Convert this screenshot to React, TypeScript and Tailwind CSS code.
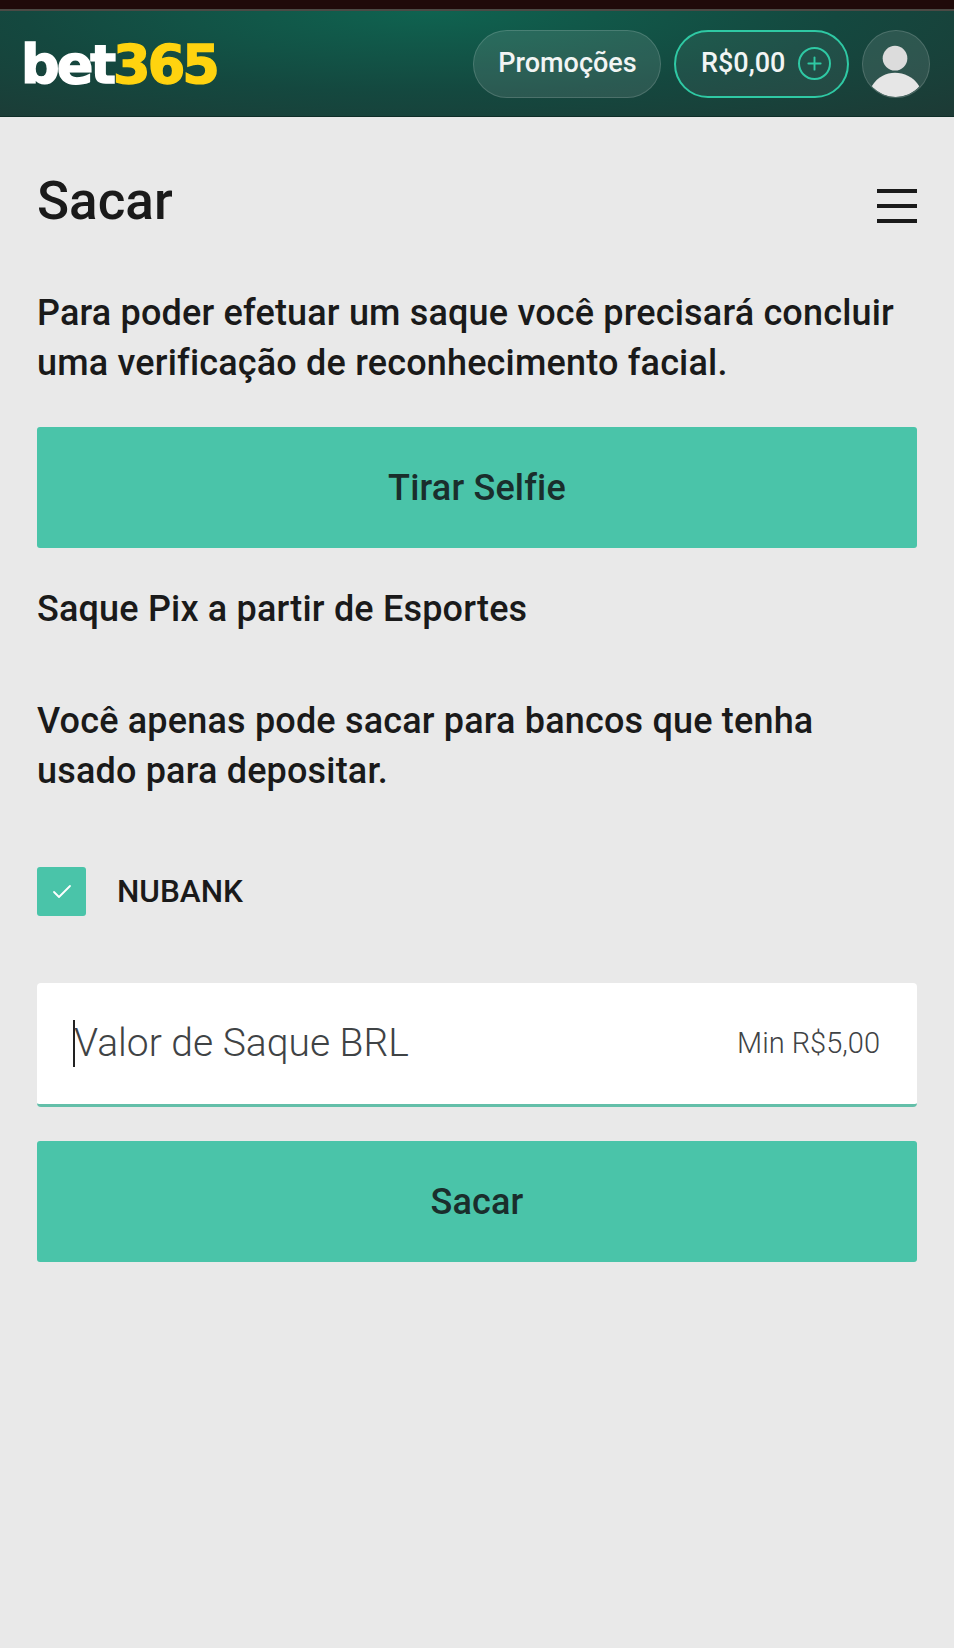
import { Check, Plus } from 'lucide-react'

const roboto = { fontFamily: 'Roboto, "Noto Sans", sans-serif' }

function Header() {
  return (
    <header className="flex h-[117px] flex-col">
      <div className="h-[9px] bg-[#1f0a0a]" />
      <div className="h-[2px] bg-[#4b4a45]" />
      <div className="flex flex-1 items-center justify-between border-b border-[#0f2e28] bg-[radial-gradient(ellipse_at_45%_0%,#0f6350_0%,#14483f_55%,#1d3a35_100%)] pl-[21px] pr-[24px]">
        <div className="mt-[2px] text-[54px] leading-none font-bold tracking-[-3px] text-white [-webkit-text-stroke:1.5px_currentColor] font-['DejaVu_Sans',sans-serif]">
          bet<span className="text-[#ffd30f]">365</span>
        </div>
        <div className="flex items-center">
          <div className="flex h-[68px] w-[188px] items-center justify-center rounded-full border border-white/15 bg-white/10 pl-[1px] text-[27px] font-medium text-[#f2f5f4]">
            Promoções
          </div>
          <div className="ml-[13px] flex h-[68px] w-[175px] items-center gap-[13px] rounded-full border-2 border-[#2fc9a4] bg-white/5 pl-[25px] text-[27px] font-medium text-[#f2f5f4]">
            R$0,00
            <span className="flex h-[33px] w-[33px] items-center justify-center rounded-full border-[2.5px] border-[#2fc9a4] text-[#2fc9a4]">
              <Plus size={21} strokeWidth={2.2} />
            </span>
          </div>
          <div className="ml-[13px] flex h-[68px] w-[68px] items-center justify-center overflow-hidden rounded-full border border-white/15 bg-white/10">
            <svg width="68" height="68" viewBox="0 0 68 68">
              <circle cx="33" cy="28" r="12.7" fill="#dcdcdc" />
              <path d="M9 57 C15 47 24 43 33 43 C42 43 52 47 58 57 C52 64 43 68 33 68 C24 68 15 64 9 57 Z" fill="#e6e6e6" />
            </svg>
          </div>
        </div>
      </div>
    </header>
  )
}

function TealButton({ label }: { label: string }) {
  return (
    <button className="flex h-[121px] w-full items-center justify-center rounded-[3px] bg-[#4ac4a9] text-[36px] font-medium tracking-[0.18px] text-[#1a2e2c]">
      {label}
    </button>
  )
}

export default function App() {
  return (
    <div style={roboto} className="min-h-[1648px] bg-[#e9e9e9] text-[#1a1a1a]">
      <Header />

      <main className="px-[37px]">
        <div className="flex h-[171px] items-center justify-between">
          <h1 className="mb-[2px] text-[53px] leading-none font-medium">Sacar</h1>
          <div className="mt-[6px] flex w-[40px] flex-col gap-[11px]">
            <span className="h-[4px] bg-[#1a1a1a]" />
            <span className="h-[4px] bg-[#1a1a1a]" />
            <span className="h-[4px] bg-[#1a1a1a]" />
          </div>
        </div>

        <p className="text-[36px] leading-[50px] font-medium tracking-[0.18px]">
          Para poder efetuar um saque você precisará concluir uma verificação de reconhecimento facial.
        </p>

        <div className="mt-[39px]">
          <TealButton label="Tirar Selfie" />
        </div>

        <p className="mt-[36px] text-[36px] leading-[50px] font-medium tracking-[0.18px]">Saque Pix a partir de Esportes</p>

        <p className="mt-[62px] text-[36px] leading-[50px] font-medium tracking-[0.18px]">
          Você apenas pode sacar para bancos que tenha usado para depositar.
        </p>

        <label className="mt-[71px] flex items-center gap-[31px]">
          <span className="flex h-[49px] w-[49px] items-center justify-center rounded-[3px] bg-[#4ac4a9] text-white">
            <Check size={24} strokeWidth={1.8} />
          </span>
          <span className="text-[31.5px] font-medium">NUBANK</span>
        </label>

        <div className="mt-[67px] flex h-[124px] items-center justify-between rounded-[4px] border-b-[3px] border-[#63bfa9] bg-white pl-[36px] pr-[37px]">
          <div className="flex items-center">
            <span className="mr-[-1px] h-[47px] w-[2px] bg-[#222]" />
            <span className="text-[39px] font-light text-[#3f4345]">Valor de Saque BRL</span>
          </div>
          <span className="text-[29px] font-light text-[#3f4345]">Min R$5,00</span>
        </div>

        <div className="mt-[34px]">
          <TealButton label="Sacar" />
        </div>
      </main>
    </div>
  )
}
